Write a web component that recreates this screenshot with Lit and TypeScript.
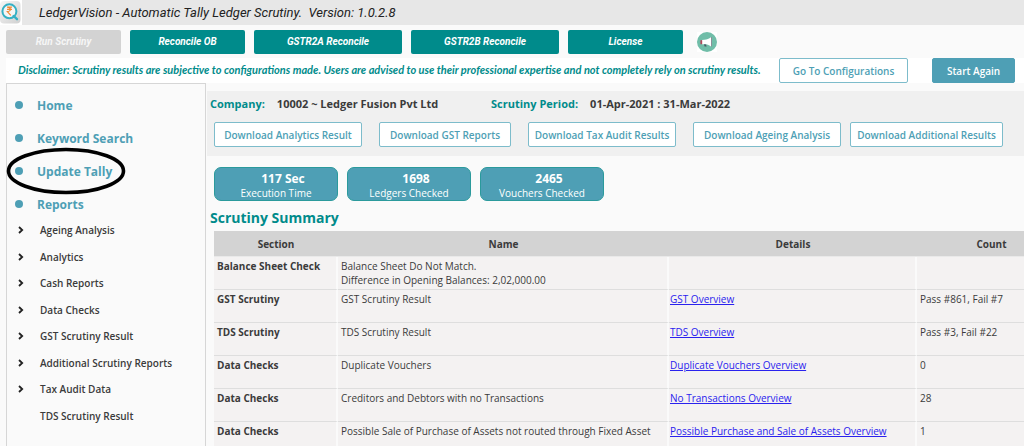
import { LitElement, html, css, svg, nothing } from "lit";
import { customElement } from "lit/decorators.js";

interface SummaryRow {
  section: string;
  name: string[];
  link?: string;
  count?: string;
}

const ACTIONS = [
  { label: "Run Scrutiny", wide: false, disabled: true },
  { label: "Reconcile OB", wide: false, disabled: false },
  { label: "GSTR2A Reconcile", wide: true, disabled: false },
  { label: "GSTR2B Reconcile", wide: true, disabled: false },
  { label: "License", wide: false, disabled: false },
];

const SECTIONS = ["Home", "Keyword Search", "Update Tally", "Reports"];

const REPORTS = [
  { label: "Ageing Analysis", expandable: true },
  { label: "Analytics", expandable: true },
  { label: "Cash Reports", expandable: true },
  { label: "Data Checks", expandable: true },
  { label: "GST Scrutiny Result", expandable: true },
  { label: "Additional Scrutiny Reports", expandable: true },
  { label: "Tax Audit Data", expandable: true },
  { label: "TDS Scrutiny Result", expandable: false },
];

const STATS = [
  { value: "117 Sec", label: "Execution Time" },
  { value: "1698", label: "Ledgers Checked" },
  { value: "2465", label: "Vouchers Checked" },
];

const ROWS: SummaryRow[] = [
  { section: "Balance Sheet Check", name: ["Balance Sheet Do Not Match.", "Difference in Opening Balances: 2,02,000.00"] },
  { section: "GST Scrutiny", name: ["GST Scrutiny Result"], link: "GST Overview", count: "Pass #861, Fail #7" },
  { section: "TDS Scrutiny", name: ["TDS Scrutiny Result"], link: "TDS Overview", count: "Pass #3, Fail #22" },
  { section: "Data Checks", name: ["Duplicate Vouchers"], link: "Duplicate Vouchers Overview", count: "0" },
  { section: "Data Checks", name: ["Creditors and Debtors with no Transactions"], link: "No Transactions Overview", count: "28" },
  {
    section: "Data Checks",
    name: ["Possible Sale of Purchase of Assets not routed through Fixed Asset"],
    link: "Possible Purchase and Sale of Assets Overview",
    count: "1",
  },
];

const logo = html`<svg class="logo" viewBox="0 0 22 25" aria-hidden="true">
  ${svg`
    <defs>
      <linearGradient id="tile" x1="0" y1="0" x2="1" y2="1">
        <stop offset="0" stop-color="#f6f6f6" /><stop offset="1" stop-color="#d0d0d0" />
      </linearGradient>
    </defs>
    <rect x="0" y="1" width="20.5" height="22.5" rx="4" fill="url(#tile)" />
    <circle cx="9.4" cy="11.3" r="7" fill="#f5f5f5" stroke="#35b0c4" stroke-width="2" />
    <path d="M13.6 16 L17 19.2" stroke="#35b0c4" stroke-width="2.4" stroke-linecap="round" />
    <path d="M7 7.2H12M7 9.4H12M7.2 7.2C11.4 7.2 11.4 11.6 7.4 11.6L10.8 15.4"
      fill="none" stroke="#f08a35" stroke-width="1.2" />`}
</svg>`;

const megaphone = html`<svg class="horn" viewBox="0 0 20 20" aria-hidden="true">
  ${svg`
    <circle cx="10" cy="10" r="10" fill="#70bda8" />
    <path d="M5 8 L7.4 7.8 C10 7.6 12 6.8 14 5.2 V14.4 C12 12.8 10 12.2 7.4 12.2 L5 12.2Z" fill="#fff" />
    <path d="M7 12.2 L7.6 14.4 H9.6 L9 12.4Z" fill="#4a5763" />
    <path d="M3.4 8.2H5.2V12.2H3.4Z" fill="#b3475a" />
    <path d="M14 5H15V14.6H14Z" fill="#8b8f98" />`}
</svg>`;

@customElement("app-root")
export class AppRoot extends LitElement {
  static styles = css`
    :host {
      display: flex;
      flex-direction: column;
      height: 100vh;
      overflow: hidden;
      background: #fafafa;
      color: #3b3b3b;
      font: 10px/14px "Open Sans", "Noto Sans", sans-serif;
    }
    * { box-sizing: border-box; }
    button { font: inherit; margin: 0; padding: 0; white-space: nowrap; }
    ul { list-style: none; margin: 0; padding: 0; }
    h1, h2, p, dl, dd { margin: 0; }

    .title-bar {
      flex: none;
      display: flex;
      align-items: center;
      gap: 17px;
      height: 25px;
      background: #e7e7e7;
    }
    .logo { width: 22px; height: 25px; background: #fff; }
    .title {
      font: italic 400 13px/24px Roboto, sans-serif;
      color: #222;
      white-space: pre;
    }

    .actions {
      flex: none;
      display: flex;
      align-items: center;
      gap: 9px;
      padding: 5px 6px 4px;
    }
    .action {
      width: 115px;
      height: 24px;
      border: 0;
      border-radius: 2px;
      background: #008b8b;
      color: #fff;
      font: italic 700 10px/24px Roboto, sans-serif;
    }
    .action.wide { width: 148px; }
    .action:disabled { background: #d3d3d3; color: #f6f6f6; }
    .announce {
      width: 20px;
      height: 20px;
      margin-left: 5px;
      border: 0;
      background: #fff;
    }
    .horn { display: block; width: 20px; height: 20px; }

    .notice {
      flex: none;
      display: flex;
      align-items: center;
      height: 25px;
      margin-left: 6px;
      padding: 0 9px 0 12px;
      background: #fff;
    }
    .disclaimer {
      flex: 1;
      min-width: 0;
      padding-bottom: 2px;
      color: #008b8b;
      font: italic 700 11px/14px Lato, sans-serif;
      white-space: nowrap;
    }
    .outline, .solid {
      flex: none;
      height: 25px;
      border: 1px solid #7dbccb;
      border-radius: 2px;
      background: #fff;
      color: #4e9fb5;
      font-weight: 600;
    }
    .solid { width: 83px; background: #4e9fb5; border-color: #4e9fb5; color: #fff; }
    .configure { width: 129px; margin-right: 24px; }

    .body { flex: 1; display: flex; min-height: 0; }
    .sidebar {
      flex: none;
      width: 200px;
      margin-left: 6px;
      padding-top: 5px;
      border: 1px solid #d6d6d6;
      border-bottom: 0;
    }
    .section { position: relative; display: flex; align-items: center; height: 33px; }
    .section::before {
      content: "";
      width: 8px;
      height: 8px;
      margin: 0 14px 2px 8px;
      border-radius: 50%;
      background: #4e9fb5;
    }
    .section-link { color: #4e9fb5; font-size: 12px; font-weight: 700; text-decoration: none; }
    .ring { position: absolute; left: -1px; top: -8px; width: 120px; height: 48px; pointer-events: none; }
    .reports { display: grid; grid-auto-rows: 1fr; height: 212px; margin-top: -4px; }
    .report { display: grid; grid-template-columns: 22px 1fr; align-items: center; padding-left: 11px; }
    .report-link { grid-column: 2; color: #3b3b3b; font-weight: 600; text-decoration: none; }
    .chevron { width: 6px; height: 8px; }

    .main { flex: 1; min-width: 0; padding-top: 8px; overflow: hidden; }
    .company { height: 65px; margin-left: 1px; padding: 5px 0 0 3px; background: #f0f0f0; }
    .facts { display: flex; font-size: 11px; line-height: 16px; font-weight: 700; white-space: nowrap; }
    .facts dt { color: #008b8b; }
    .facts dd { margin-left: 12px; }
    .fact { display: flex; width: 281px; }
    .downloads { display: flex; gap: 17px; margin: 10px 0 0 4px; }
    .download { width: 148px; }
    .download.narrow { width: 132px; }
    .download.last { width: 153px; margin-left: -8px; }

    .stats { display: flex; gap: 9px; margin: 11px 0 0 8px; }
    .stat {
      width: 124px;
      height: 34px;
      padding: 4px 0 0;
      border: 1px solid #2b9a9c;
      border-radius: 7px;
      background: #4e9fb5;
      color: #fff;
      text-align: center;
      line-height: 14px;
    }
    .stat-value { display: block; padding-left: 14px; font-size: 12px; font-weight: 700; }
    .stat-label { display: block; }
    .heading { margin: 7px 0 3px 4px; color: #008b8b; font-size: 14px; line-height: 20px; font-weight: 700; }

    .summary {
      width: 100%;
      min-width: 852px;
      margin-left: 8px;
      border-collapse: separate;
      border-spacing: 0;
      table-layout: fixed;
    }
    .summary thead th {
      height: 26px;
      padding: 0;
      border-bottom: 1px solid #e9e9e9;
      background: #d3d3d3;
      font-weight: 700;
      text-align: center;
    }
    .summary td, .summary tbody th {
      height: 33px;
      padding: 2px 2px 2px 3px;
      border-right: 2px solid #fafafa;
      border-bottom: 1px solid #dedede;
      background: #f4f2f2;
      vertical-align: top;
      text-align: left;
      white-space: nowrap;
    }
    .summary td.details { padding-left: 1px; }
    .col-section { width: 124px; }
    .col-name { width: 331px; }
    .col-details { width: 248px; }
    .line { display: block; }
    .overview { color: #2a22ee; }
  `;

  render() {
    return html`
      <header class="title-bar">
        ${logo}
        <h1 class="title">LedgerVision - Automatic Tally Ledger Scrutiny.  Version: 1.0.2.8</h1>
      </header>
      <div class="actions">
        ${ACTIONS.map(
          (a) => html`<button class="action ${a.wide ? "wide" : ""}" ?disabled=${a.disabled}>${a.label}</button>`
        )}
        <button class="announce" aria-label="Announcements">${megaphone}</button>
      </div>
      <div class="notice">
        <p class="disclaimer">Disclaimer: Scrutiny results are subjective to configurations made. Users are advised to use their professional expertise and not completely rely on scrutiny results.</p>
        <button class="outline configure">Go To Configurations</button>
        <button class="solid">Start Again</button>
      </div>
      <div class="body">
        <nav class="sidebar">
          <ul>
            ${SECTIONS.map(
              (s) => html`<li class="section">
                <a class="section-link" href="#">${s}</a>
                ${s === "Update Tally"
                  ? html`<svg class="ring" viewBox="0 0 120 48" aria-hidden="true">
                      <ellipse cx="60" cy="24" rx="57.5" ry="21.5" fill="none" stroke="#000" stroke-width="3.6" />
                    </svg>`
                  : nothing}
              </li>`
            )}
          </ul>
          <ul class="reports">
            ${REPORTS.map(
              (r) => html`<li class="report">
                ${r.expandable
                  ? html`<svg class="chevron" viewBox="0 0 6 8" aria-hidden="true">
                      <path d="M1 1L4.2 4L1 7" fill="none" stroke="#222" stroke-width="1.8" />
                    </svg>`
                  : nothing}
                <a class="report-link" href="#">${r.label}</a>
              </li>`
            )}
          </ul>
        </nav>
        <main class="main">
          <section class="company">
            <dl class="facts">
              <div class="fact"><dt>Company:</dt><dd>10002 ~ Ledger Fusion Pvt Ltd</dd></div>
              <div class="fact"><dt>Scrutiny Period:</dt><dd>01-Apr-2021 : 31-Mar-2022</dd></div>
            </dl>
            <div class="downloads">
              <button class="outline download">Download Analytics Result</button>
              <button class="outline download narrow">Download GST Reports</button>
              <button class="outline download">Download Tax Audit Results</button>
              <button class="outline download">Download Ageing Analysis</button>
              <button class="outline download last">Download Additional Results</button>
            </div>
          </section>
          <div class="stats">
            ${STATS.map(
              (s) => html`<div class="stat">
                <span class="stat-value">${s.value}</span><span class="stat-label">${s.label}</span>
              </div>`
            )}
          </div>
          <h2 class="heading">Scrutiny Summary</h2>
          <table class="summary">
            <colgroup><col class="col-section" /><col class="col-name" /><col class="col-details" /><col /></colgroup>
            <thead>
              <tr><th>Section</th><th>Name</th><th>Details</th><th>Count</th></tr>
            </thead>
            <tbody>
              ${ROWS.map(
                (r) => html`<tr>
                  <th scope="row">${r.section}</th>
                  <td>${r.name.map((n) => html`<span class="line">${n}</span>`)}</td>
                  <td class="details">${r.link ? html`<a class="overview" href="#">${r.link}</a>` : nothing}</td>
                  <td>${r.count ?? nothing}</td>
                </tr>`
              )}
            </tbody>
          </table>
        </main>
      </div>
    `;
  }
}
